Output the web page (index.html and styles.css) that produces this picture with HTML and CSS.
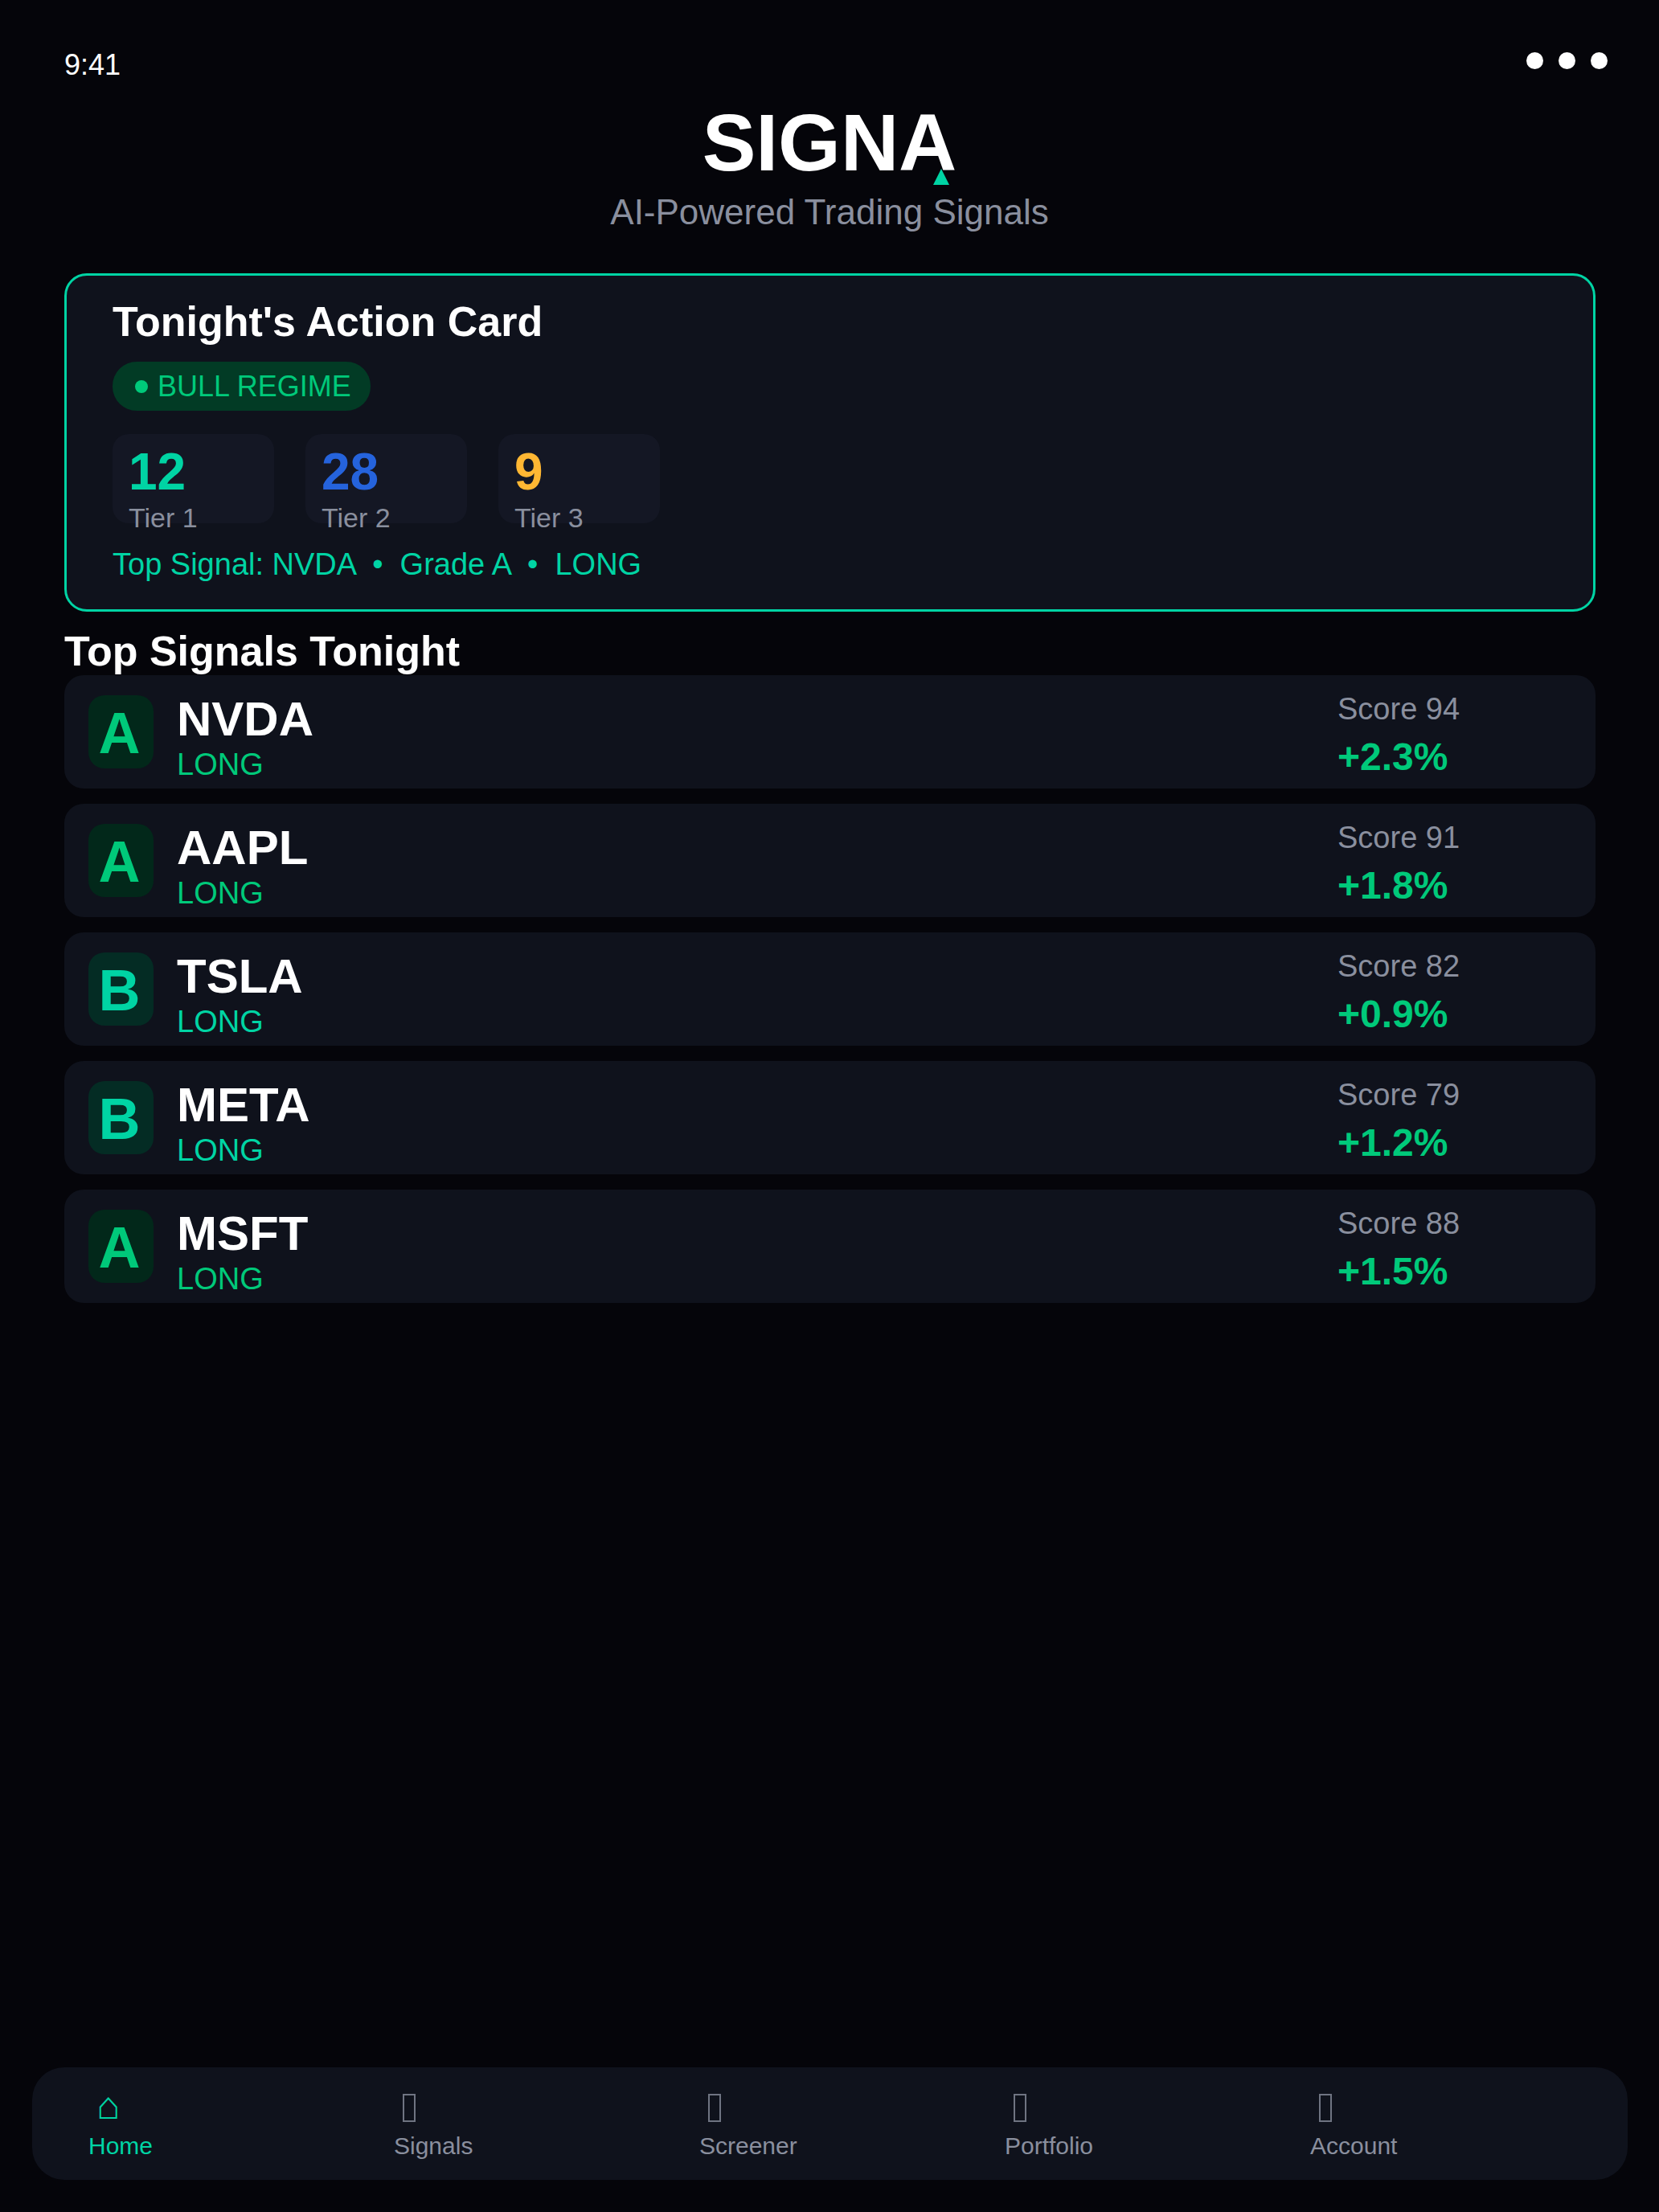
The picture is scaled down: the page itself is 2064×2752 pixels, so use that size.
FILE: index.html
```html
<!DOCTYPE html>
<html lang="en">
<head>
    <meta charset="UTF-8">
    <meta name="viewport" content="width=device-width, initial-scale=1.0">
    <title>SIGNA</title>
    <link rel="stylesheet" href="styles.css">
</head>
<body>

<div class="app">
    <div class="status-bar">
        <span>9:41</span>
        <div class="status-dots">
            <span class="status-dot"></span>
            <span class="status-dot"></span>
            <span class="status-dot"></span>
        </div>
    </div>

    <header class="brand">
        <h1 class="brand-name">SIGNA<span class="brand-mark"></span></h1>
        <p class="brand-tagline">AI-Powered Trading Signals</p>
    </header>

    <section class="action-card">
        <h2 class="action-title">Tonight's Action Card</h2>
        <div class="regime-pill"><span class="regime-dot"></span>BULL REGIME</div>
        <div class="tiers">
            <div class="tier">
                <div class="tier-count tier-count-1">12</div>
                <div class="tier-label">Tier 1</div>
            </div>
            <div class="tier">
                <div class="tier-count tier-count-2">28</div>
                <div class="tier-label">Tier 2</div>
            </div>
            <div class="tier">
                <div class="tier-count tier-count-3">9</div>
                <div class="tier-label">Tier 3</div>
            </div>
        </div>
        <p class="top-signal">Top Signal: NVDA &nbsp;•&nbsp; Grade A &nbsp;•&nbsp; LONG</p>
    </section>

    <h2 class="section-title">Top Signals Tonight</h2>

    <div class="signal-list">
        <div class="signal">
            <div class="grade grade-a">A</div>
            <div class="signal-info">
                <div class="ticker">NVDA</div>
                <div class="direction">LONG</div>
            </div>
            <div class="signal-stats">
                <div class="score">Score 94</div>
                <div class="change">+2.3%</div>
            </div>
        </div>
        <div class="signal">
            <div class="grade grade-a">A</div>
            <div class="signal-info">
                <div class="ticker">AAPL</div>
                <div class="direction">LONG</div>
            </div>
            <div class="signal-stats">
                <div class="score">Score 91</div>
                <div class="change">+1.8%</div>
            </div>
        </div>
        <div class="signal">
            <div class="grade grade-b">B</div>
            <div class="signal-info">
                <div class="ticker">TSLA</div>
                <div class="direction direction-b">LONG</div>
            </div>
            <div class="signal-stats">
                <div class="score">Score 82</div>
                <div class="change">+0.9%</div>
            </div>
        </div>
        <div class="signal">
            <div class="grade grade-b">B</div>
            <div class="signal-info">
                <div class="ticker">META</div>
                <div class="direction direction-b">LONG</div>
            </div>
            <div class="signal-stats">
                <div class="score">Score 79</div>
                <div class="change">+1.2%</div>
            </div>
        </div>
        <div class="signal">
            <div class="grade grade-a">A</div>
            <div class="signal-info">
                <div class="ticker">MSFT</div>
                <div class="direction">LONG</div>
            </div>
            <div class="signal-stats">
                <div class="score">Score 88</div>
                <div class="change">+1.5%</div>
            </div>
        </div>
    </div>

    <nav class="tab-bar">
        <div class="tab tab-active">
            <span class="tab-icon">⌂</span>
            <span class="tab-label">Home</span>
        </div>
        <div class="tab">
            <span class="tab-icon"><span class="tab-box"></span></span>
            <span class="tab-label">Signals</span>
        </div>
        <div class="tab">
            <span class="tab-icon"><span class="tab-box"></span></span>
            <span class="tab-label">Screener</span>
        </div>
        <div class="tab">
            <span class="tab-icon"><span class="tab-box"></span></span>
            <span class="tab-label">Portfolio</span>
        </div>
        <div class="tab">
            <span class="tab-icon"><span class="tab-box"></span></span>
            <span class="tab-label">Account</span>
        </div>
    </nav>
</div>

</body>
</html>
```

FILE: styles.css
```css
* {
    box-sizing: border-box;
}

body {
    margin: 0;
    background-color: #05050a;
    color: white;
    font-family: "Liberation Sans", Arial, sans-serif;
}

.app {
    height: 2752px;
    padding: 60px 79px 40px 80px;
    display: flex;
    flex-direction: column;
    overflow: hidden;
}

/* Status bar */
.status-bar {
    display: flex;
    justify-content: space-between;
    margin-right: -15px;
    font-size: 36px;
}

.status-dots {
    display: flex;
    gap: 19px;
    padding-top: 5px;
}

.status-dot {
    width: 21px;
    height: 21px;
    background: white;
    border-radius: 50%;
}

/* Logo */
.brand {
    text-align: center;
    margin-top: 18px;
    margin-right: 1px;
}

.brand-name {
    position: relative;
    display: inline-block;
    margin: 0;
    font-size: 100px;
    font-weight: bold;
}

.brand-mark {
    position: absolute;
    right: 9px;
    bottom: 5px;
    width: 0;
    height: 0;
    border-left: 10px solid transparent;
    border-right: 10px solid transparent;
    border-bottom: 20px solid #00d4a4;
}

.brand-tagline {
    margin: 4px 0 0;
    font-size: 44px;
    color: #8a8f9e;
}

/* Action card */
.action-card {
    margin-top: 51px;
    height: 421px;
    padding: 27px 57px 0;
    background: #0f121c;
    border: 3px solid #00d4a4;
    border-radius: 28px;
}

.action-title {
    margin: 0;
    font-size: 52px;
    font-weight: bold;
}

.regime-pill {
    display: inline-flex;
    align-items: center;
    gap: 12px;
    margin-top: 20px;
    height: 61px;
    padding: 0 24px 0 28px;
    background: #023b25;
    color: #00c97a;
    font-size: 36px;
    border-radius: 30px;
}

.regime-dot {
    width: 16px;
    height: 16px;
    background: #00c97a;
    border-radius: 50%;
}

.tiers {
    display: flex;
    gap: 39px;
    margin-top: 29px;
}

.tier {
    width: 201px;
    height: 111px;
    padding: 10px 20px 0;
    background: #141724;
    border-radius: 20px;
}

.tier-count {
    font-size: 64px;
    font-weight: bold;
}

.tier-count-1 {
    color: #00d4a4;
}

.tier-count-2 {
    color: #2563dc;
}

.tier-count-3 {
    color: #ffb733;
}

.tier-label {
    margin-top: 1px;
    font-size: 34px;
    color: #8a8f9e;
}

.top-signal {
    margin: 30px 0 0;
    font-size: 38px;
    color: #00d4a4;
}

/* Signals list */
.section-title {
    margin: 20px 0 0;
    font-size: 52px;
    line-height: 59px;
    font-weight: bold;
}

.signal-list {
    display: flex;
    flex-direction: column;
    gap: 19px;
}

.signal {
    display: flex;
    align-items: flex-start;
    height: 141px;
    padding: 21px 0 0 30px;
    background: #0f121c;
    border-radius: 24px;
}

.grade {
    display: flex;
    align-items: center;
    justify-content: center;
    width: 81px;
    height: 91px;
    margin-top: 4px;
    padding: 2px 4px 0 0;
    font-size: 72px;
    font-weight: bold;
    border-radius: 20px;
}

.grade-a {
    background: #02281a;
    color: #00c97a;
}

.grade-b {
    background: #042c24;
    color: #00d4a4;
}

.signal-info {
    flex: 1;
    margin-left: 29px;
}

.ticker {
    margin-top: -1px;
    font-size: 60px;
    font-weight: bold;
}

.direction {
    margin-top: 1px;
    font-size: 38px;
    color: #00c97a;
}

.direction-b {
    color: #00d4a4;
}

.signal-stats {
    width: 321px;
}

.score {
    font-size: 38px;
    color: #8a8f9e;
}

.change {
    margin-top: 10px;
    font-size: 48px;
    font-weight: bold;
    color: #00c97a;
}

/* Bottom tab bar */
.tab-bar {
    display: grid;
    grid-template-columns: repeat(5, 1fr);
    margin: auto -40px 0;
    height: 140px;
    padding: 16px 15px 0 70px;
    background: #0f121c;
    border-radius: 40px;
}

.tab {
    display: flex;
    flex-direction: column;
    align-items: flex-start;
}

.tab-icon {
    display: flex;
    align-items: flex-end;
    height: 52px;
    margin-left: 10px;
    font-size: 48px;
    line-height: 52px;
    color: #8a8f9e;
}

.tab-box {
    display: block;
    width: 16px;
    height: 35px;
    margin-left: 1px;
    border: 2px solid #6f7482;
}

.tab-label {
    margin-top: 13px;
    font-size: 30px;
    color: #8a8f9e;
}

.tab-active .tab-icon {
    align-items: flex-start;
    line-height: 64px;
    color: #00d4a4;
}

.tab-active .tab-label {
    color: #00d4a4;
}
```
